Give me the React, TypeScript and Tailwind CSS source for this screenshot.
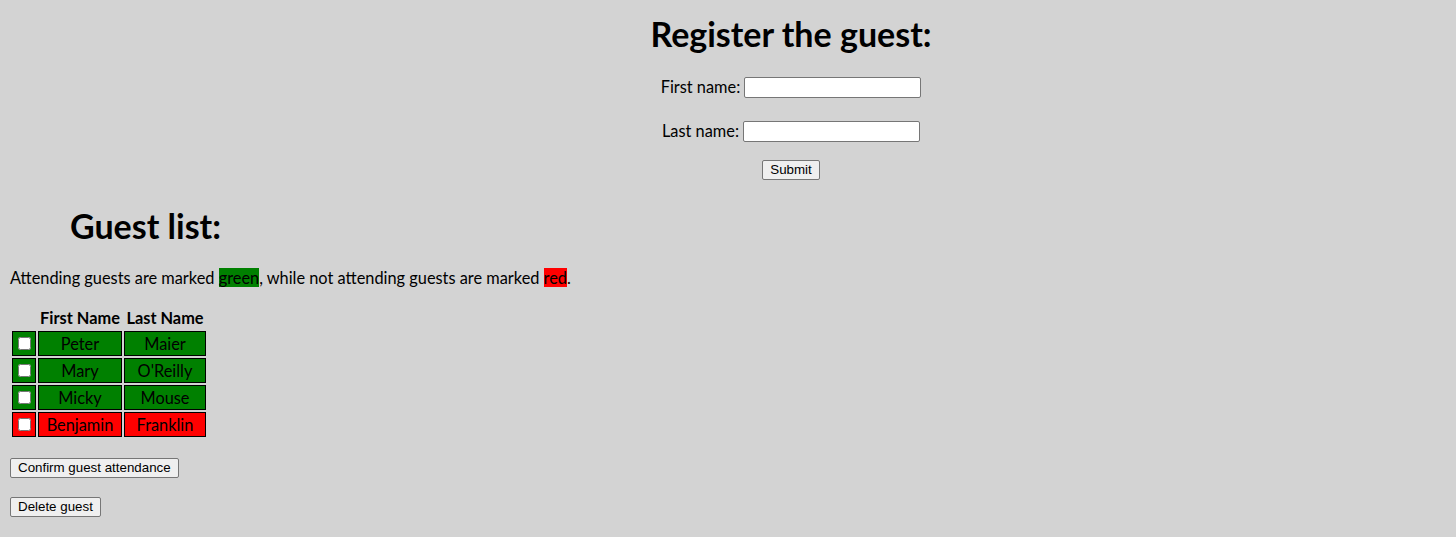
const guests = [
  { first: "Peter", last: "Maier", attending: true },
  { first: "Mary", last: "O'Reilly", attending: true },
  { first: "Micky", last: "Mouse", attending: true },
  { first: "Benjamin", last: "Franklin", attending: false },
];

const btn =
  "h-[20px] rounded-[2px] border border-[#767676] bg-[#efefef] px-[7px] font-['Liberation_Sans',Arial,sans-serif] text-[13.33px] leading-[18px] text-black";

export default function App() {
  return (
    <div className="min-h-[537px] bg-[#d3d3d3] font-['Lato',sans-serif] text-[16.35px] text-black">
      <section className="pl-[126px] text-center">
        <h1 className="pt-[14px] text-[34px] font-bold leading-[40px]">Register the guest:</h1>
        <form onSubmit={(e) => e.preventDefault()}>
          <div className="mt-[22px] flex items-center justify-center gap-[4px] leading-[22px]">
            <label>First name:</label>
            <input className="h-[21px] w-[177px] rounded-[2px] border border-[#767676] bg-white" />
          </div>
          <div className="mt-[22px] flex items-center justify-center gap-[4px] leading-[22px]">
            <label>Last name:</label>
            <input className="h-[21px] w-[177px] rounded-[2px] border border-[#767676] bg-white" />
          </div>
          <div className="mt-[18px] flex justify-center">
            <button type="submit" className={btn}>Submit</button>
          </div>
        </form>
      </section>

      <section className="px-[10px]">
        <h1 className="mt-[26px] pl-[60px] text-[34px] font-bold leading-[40px]">Guest list:</h1>
        <p className="mt-[20px] leading-[24px]">
          Attending guests are marked <span className="bg-[#008000]">green</span>, while not attending
          guests are marked <span className="bg-[#ff0000]">red</span>.
        </p>
        <table className="mt-[15px] border-separate border-spacing-[2px]">
          <thead>
            <tr className="h-[22px] whitespace-nowrap font-bold leading-[22px]">
              <th className="w-[24px] p-0"></th>
              <th className="w-[84px] p-0">First Name</th>
              <th className="w-[82px] p-0">Last Name</th>
            </tr>
          </thead>
          <tbody>
            {guests.map((g) => {
              const bg = g.attending ? "bg-[#008000]" : "bg-[#ff0000]";
              return (
                <tr key={g.first} className="h-[25px] leading-[23px]">
                  <td className={`border border-black p-0 ${bg}`}>
                    <div className="flex h-[23px] items-center justify-center">
                      <input type="checkbox" className="m-0 h-[13px] w-[13px] appearance-auto" />
                    </div>
                  </td>
                  <td className={`border border-black p-0 text-center ${bg}`}>{g.first}</td>
                  <td className={`border border-black p-0 text-center ${bg}`}>{g.last}</td>
                </tr>
              );
            })}
          </tbody>
        </table>
        <div className="mt-[19px] flex">
          <button className={btn}>Confirm guest attendance</button>
        </div>
        <div className="mt-[19px] flex">
          <button className={btn}>Delete guest</button>
        </div>
      </section>
    </div>
  );
}
